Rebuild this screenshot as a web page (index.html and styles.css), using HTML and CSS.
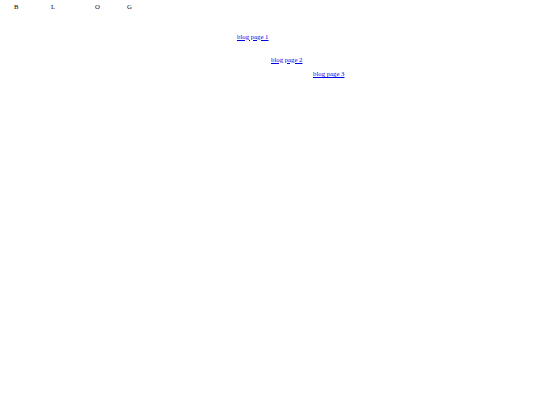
FILE: index.html
```html
<!DOCTYPE html>
<html>
<head>
<meta charset="utf-8">
<link rel="stylesheet" href="styles.css">
<title>Blog</title>
</head>
<body>
<header class="logo">
  <span>B</span><span>L</span><span>O</span><span>G</span>
</header>
<nav class="pages">
  <div class="item item-1"><a href="#">blog page 1</a></div>
  <div class="item item-2"><a href="#">blog page 2</a></div>
  <div class="item item-3"><a href="#">blog page 3</a></div>
</nav>
</body>
</html>
```
FILE: styles.css
```css
html, body {
  margin: 0;
  padding: 0;
  background: #ffffff;
}
body {
  font-family: "Liberation Serif", "Times New Roman", serif;
  font-size: 6.75px;
  line-height: 1.15;
  color: #000000;
}
.logo {
  display: grid;
  grid-template-columns: 37px 44px 32px auto;
  padding: 3px 0 0 14px;
  font-size: 6.75px;
}
.pages {
  display: flex;
  flex-direction: column;
  padding-top: 22px;
}
.item a {
  color: #0000ee;
  text-decoration: underline;
}
.item-1 { padding-left: 237px; }
.item-2 { padding-left: 271px; padding-top: 15px; }
.item-3 { padding-left: 313px; padding-top: 7px; }
```
